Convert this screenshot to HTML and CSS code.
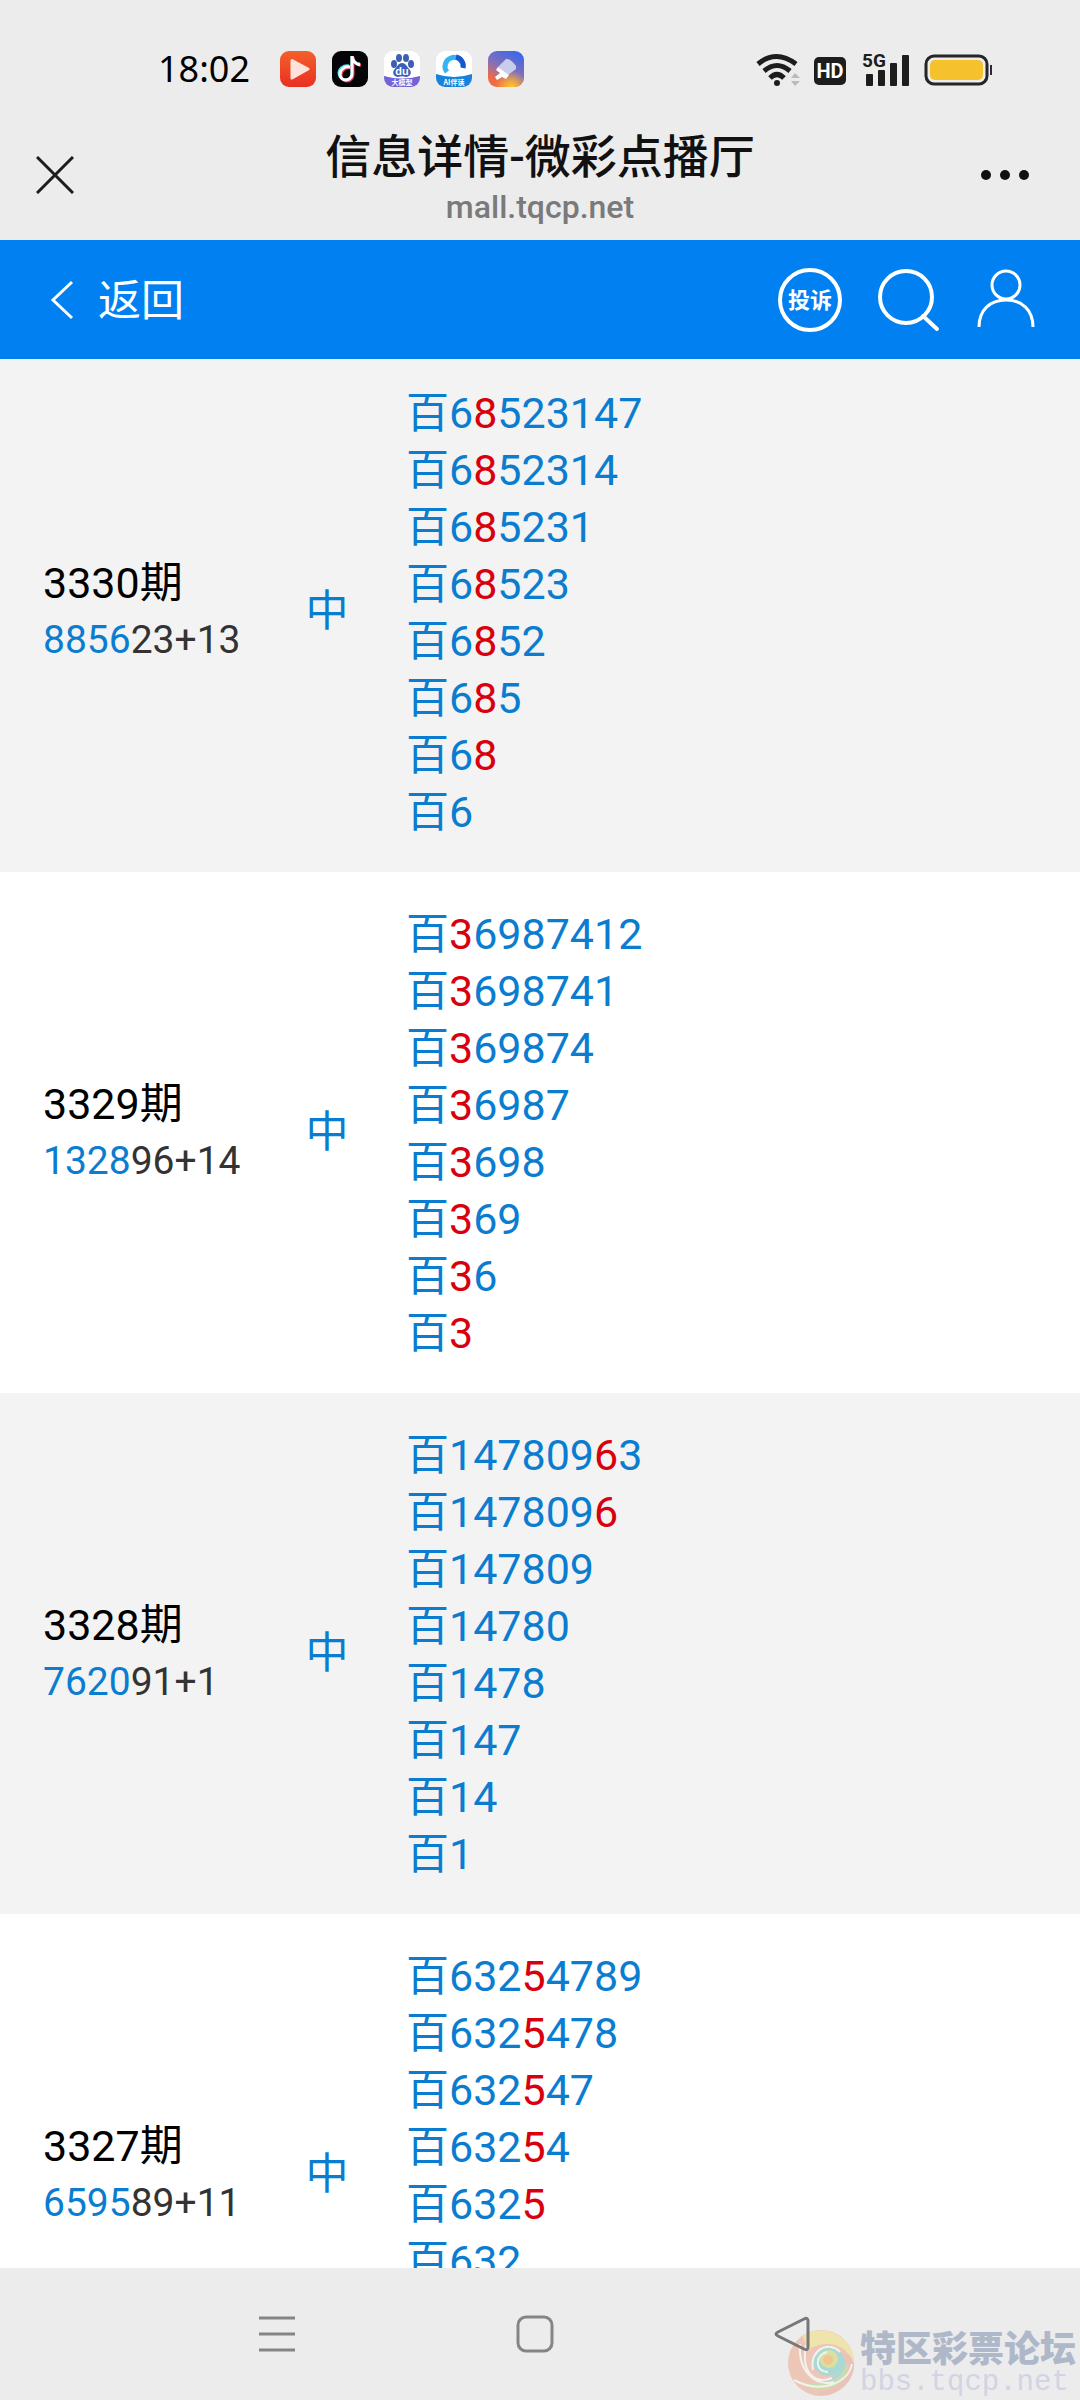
FILE: index.html
```html
<!DOCTYPE html>
<html lang="zh-CN">
<head>
<meta charset="utf-8">
<meta name="viewport" content="width=device-width, initial-scale=1">
<title>信息详情-微彩点播厅</title>
<link rel="stylesheet" href="styles.css">
</head>
<body>
<div class="screen">
  <div class="status">
    <div class="status-left">
      <time class="clock">18:02</time>
      <div class="apps">
        <svg width="36" height="36" viewBox="0 0 36 36"><defs><linearGradient id="play" x2="0" y2="1"><stop stop-color="#f4602a"/><stop offset="1" stop-color="#ea2f22"/></linearGradient></defs><rect width="36" height="36" rx="9" fill="url(#play)"/><path d="M12 9.500 L28 18 L12 27z" fill="#fde3da" stroke="#fde3da" stroke-width="3" stroke-linejoin="round"/></svg>
        <svg width="36" height="36" viewBox="0 0 36 36"><rect width="36" height="36" rx="9" fill="#050507"/><g fill="none" stroke-width="3"><path d="M17 15c-6-1-10 3-10 7s3 7 7 7 6-3 6-6V5c0 4 3 8 8 8" stroke="#3fe3e3"/><path d="M19 17c-6-1-10 3-10 7s3 6 6 6 6-3 6-6V6c0 4 3 8 8 8" stroke="#f04060"/><path d="M18 16c-6-1-10 3-10 7s3 6 6 6 6-3 6-6V5c0 4 3 8 8 9" stroke="#fff"/></g></svg>
        <svg width="36" height="36" viewBox="0 0 36 36"><clipPath id="tile"><rect width="36" height="36" rx="9"/></clipPath><g clip-path="url(#tile)"><rect width="36" height="36" fill="#fff"/><g fill="#3c5fb5"><ellipse cx="10" cy="13" rx="3" ry="4"/><ellipse cx="15" cy="7" rx="3" ry="4"/><ellipse cx="22" cy="7" rx="3" ry="4"/><ellipse cx="27" cy="13" rx="3" ry="4"/><path d="M18 12c4 0 5 4 8 7 2 3 0 7-4 7-3-1-5-1-8 0-4 0-6-4-4-7 3-3 4-7 8-7z"/></g><path d="M0 25q18 5 36 0v11H0z" fill="#7563d6"/></g><text x="18" y="24" class="logo-du">du</text><text x="18" y="34" class="logo-tag">大模型</text></svg>
        <svg width="36" height="36" viewBox="0 0 36 36"><g clip-path="url(#tile)"><rect width="36" height="36" fill="#fff"/><path d="M11 21a9 9 0 1 1 16-5" fill="none" stroke="#35b5ed" stroke-width="5"/><path d="M20 6a9 9 0 0 1 7 11" fill="none" stroke="#1757ce" stroke-width="5"/><path d="M0 23q18 6 36 0v13H0z" fill="#1682dc"/></g><text x="18" y="34" class="logo-tag">AI伴读</text></svg>
        <svg width="36" height="36" viewBox="0 0 36 36"><defs><linearGradient id="brush" x1=".7" x2=".2" y2="1"><stop stop-color="#3d68e8"/><stop offset=".5" stop-color="#8870b5"/><stop offset=".85" stop-color="#f06b45"/></linearGradient><radialGradient id="glow" cx=".65" cy="1" r=".45"><stop stop-color="#ffc928"/><stop offset="1" stop-color="#ffc928" stop-opacity="0"/></radialGradient></defs><rect width="36" height="36" rx="9" fill="url(#brush)"/><rect width="36" height="36" rx="9" fill="url(#glow)"/><path d="M10 16L18 8q4-1 10 7v3L20 24z" fill="#c9cdea"/><path d="M10 16l11 8-3 4-4-2-5 3-2-3 5-4-4-3z" fill="#fff"/></svg>
      </div>
    </div>
    <svg class="signals" width="238" height="40" viewBox="0 0 238 40">
      <g fill="none" stroke="#1d1d1d" stroke-width="5"><path d="M2 15q18-15 38 0"/><path d="M8 22q13-11 26 0"/><path d="M14 29q7-7 14 0"/></g>
      <circle cx="21" cy="34" r="3" fill="#1d1d1d"/>
      <path d="M35 29l4-5 5 5zM35 32h9l-5 5z" fill="#bbb"/>
      <rect x="58" y="8" width="32" height="28" rx="5" fill="#1d1d1d"/>
      <text x="74" y="29" class="sig-hd">HD</text>
      <text x="106" y="18" class="sig-5g">5G</text>
      <g fill="#1d1d1d"><rect x="110" y="25" width="7" height="12" rx="1"/><rect x="122" y="21" width="7" height="16" rx="1"/><rect x="134" y="14" width="7" height="23" rx="1"/><rect x="146" y="6" width="7" height="31" rx="1"/></g>
      <rect x="170" y="7" width="61" height="28" rx="8" fill="none" stroke="#252525" stroke-width="3"/>
      <rect x="174" y="11" width="53" height="20" rx="5" fill="#f5c22e"/>
      <rect x="234" y="16" width="2" height="10" fill="#302838"/>
    </svg>
  </div>

  <header class="browser-bar">
    <button class="icon-btn" aria-label="关闭"><svg width="38" height="38" viewBox="0 0 38 38"><path d="M1 1L37 37M37 1L1 37" stroke="#1c1c1c" stroke-width="3"/></svg></button>
    <div class="titles"><h1>信息详情-微彩点播厅</h1><p>mall.tqcp.net</p></div>
    <button class="icon-btn" aria-label="更多"><svg width="50" height="38" viewBox="0 0 50 38" fill="#111"><circle cx="6" cy="19" r="5"/><circle cx="25" cy="19" r="5"/><circle cx="44" cy="19" r="5"/></svg></button>
  </header>

  <nav class="site-bar">
    <a class="back" href="#"><svg width="24" height="40" viewBox="0 0 24 40"><path d="M22 2L3 20L22 38" fill="none" stroke="#fff" stroke-width="3"/></svg><span>返回</span></a>
    <div class="tools">
      <a class="complain" href="#">投诉</a>
      <a class="icon-link" href="#" aria-label="搜索"><svg width="62" height="64" viewBox="0 0 62 64" fill="none" stroke="#fff" stroke-width="4" stroke-linecap="round"><circle cx="28" cy="29" r="26"/><path d="M45 48L59 61"/></svg></a>
      <a class="icon-link" href="#" aria-label="我的"><svg width="60" height="64" viewBox="0 0 60 64" fill="none" stroke="#fff" stroke-width="3"><circle cx="30" cy="17" r="14"/><path d="M3 59C3 42 14 32 30 32S57 42 57 59"/></svg></a>
    </div>
  </nav>

  <main class="content">
    <table class="plans">
      <colgroup><col class="c-issue"><col class="c-hit"><col></colgroup>
      <tbody>
        <tr>
          <td class="issue"><p class="no">3330期</p><p class="draw"><b>8856</b>23+13</p></td>
          <td class="hit">中</td>
          <td class="picks"><p>百6<em>8</em>523147</p><p>百6<em>8</em>52314</p><p>百6<em>8</em>5231</p><p>百6<em>8</em>523</p><p>百6<em>8</em>52</p><p>百6<em>8</em>5</p><p>百6<em>8</em></p><p>百6</p></td>
        </tr>
        <tr>
          <td class="issue"><p class="no">3329期</p><p class="draw"><b>1328</b>96+14</p></td>
          <td class="hit">中</td>
          <td class="picks"><p>百<em>3</em>6987412</p><p>百<em>3</em>698741</p><p>百<em>3</em>69874</p><p>百<em>3</em>6987</p><p>百<em>3</em>698</p><p>百<em>3</em>69</p><p>百<em>3</em>6</p><p>百<em>3</em></p></td>
        </tr>
        <tr>
          <td class="issue"><p class="no">3328期</p><p class="draw"><b>7620</b>91+1</p></td>
          <td class="hit">中</td>
          <td class="picks"><p>百147809<em>6</em>3</p><p>百147809<em>6</em></p><p>百147809</p><p>百14780</p><p>百1478</p><p>百147</p><p>百14</p><p>百1</p></td>
        </tr>
        <tr>
          <td class="issue"><p class="no">3327期</p><p class="draw"><b>6595</b>89+11</p></td>
          <td class="hit">中</td>
          <td class="picks"><p>百632<em>5</em>4789</p><p>百632<em>5</em>478</p><p>百632<em>5</em>47</p><p>百632<em>5</em>4</p><p>百632<em>5</em></p><p>百632</p><p>百63</p><p>百6</p></td>
        </tr>
      </tbody>
    </table>
  </main>

  <footer class="system-nav">
    <button class="icon-btn" aria-label="最近任务"><svg width="40" height="40" viewBox="0 0 40 40"><path d="M2 4H38M2 20H38M2 36H38" stroke="#858585" stroke-width="3"/></svg></button>
    <button class="icon-btn" aria-label="主页"><svg width="40" height="40" viewBox="0 0 40 40"><rect x="3" y="3" width="34" height="34" rx="8" fill="none" stroke="#858585" stroke-width="3"/></svg></button>
    <button class="icon-btn" aria-label="返回"><svg width="40" height="40" viewBox="0 0 40 40"><path d="M5 18L31 5Q35 3 35 7V33Q35 37 31 35L5 22Q1 20 5 18z" fill="none" stroke="#777" stroke-width="3"/></svg></button>
    <div class="watermark">
      <svg width="70" height="70" viewBox="0 0 70 70">
        <circle cx="35" cy="35" r="33" fill="#ecc0ae"/>
        <path d="M17 8A33 33 0 0 1 68 38C64 18 42 9 22 22z" fill="#f0e3a0"/>
        <path d="M68 36C68 56 50 69 30 67C48 60 58 48 52 24C62 24 67 30 68 36z" fill="#e9bcae"/>
        <path d="M62 34C64 52 46 66 24 60L8 52C36 62 56 52 62 34z" fill="#c2dca5"/>
        <path d="M27 42C22 24 38 14 50 21C66 30 60 52 38 55C58 47 54 29 42 28C34 27 30 36 27 42z" fill="#9ed8d8"/>
        <circle cx="42" cy="33" r="15" fill="#9fd6cf"/>
        <circle cx="43" cy="31" r="9" fill="#d8df94"/><circle cx="42" cy="32" r="5" fill="#f0bf80"/>
        <path d="M14 16C12 42 28 59 48 54M20 17C15 44 28 57 46 50M66 36C62 56 34 66 8 52M27 42C23 20 44 13 54 24M42 44C28 44 29 26 41 24" fill="none" stroke="#f6f2ee" stroke-width="2"/>
      </svg>
      <div class="wm-text"><strong>特区彩票论坛</strong><span>bbs.tqcp.net</span></div>
    </div>
  </footer>
</div>
</body>
</html>
```
FILE: styles.css
```css
* {
  box-sizing: border-box;
  margin: 0;
  padding: 0;
}

body {
  font-family: Roboto, "Noto Sans CJK SC", sans-serif;
  background: #ececec;
  color: #000;
}

a {
  color: inherit;
  text-decoration: none;
}

button {
  border: 0;
  background: none;
}

svg {
  display: block;
}

.screen {
  display: flex;
  flex-direction: column;
  height: 100vh;
  overflow: hidden;
}

/* phone status bar */
.status {
  display: flex;
  align-items: center;
  justify-content: space-between;
  height: 120px;
  padding: 18px 86px 0 158px;
}

.status-left {
  display: flex;
  align-items: center;
  gap: 30px;
}

.clock {
  font: 36px/40px "Noto Sans", sans-serif;
}

.apps {
  display: flex;
  gap: 16px;
}

.logo-du {
  font: bold 11px "Liberation Sans", sans-serif;
  fill: #fff;
  text-anchor: middle;
}

.logo-tag {
  font: bold 7px "Noto Sans CJK SC", sans-serif;
  fill: #fff;
  text-anchor: middle;
}

.sig-hd {
  font: bold 20px Roboto, sans-serif;
  fill: #fff;
  text-anchor: middle;
}

.sig-5g {
  font: bold 19px Roboto, sans-serif;
  fill: #1d1d1d;
}

/* in-app browser title bar */
.browser-bar {
  display: flex;
  align-items: center;
  justify-content: space-between;
  height: 120px;
  padding: 0 50px 10px 36px;
}

.titles {
  flex: 1;
  padding: 7px 0 0 26px;
  text-align: center;
}

.titles h1 {
  font-size: 46px;
  line-height: 56px;
  font-weight: 500;
  color: #111;
}

.titles p {
  font-size: 32px;
  line-height: 44px;
  font-weight: 500;
  color: #7a7a7a;
}

/* site header */
.site-bar {
  position: relative;
  z-index: 1;
  display: flex;
  align-items: center;
  justify-content: space-between;
  height: 119px;
  padding: 0 44px 0 50px;
  background: #0080f1;
  color: #fff;
}

.back {
  display: flex;
  align-items: center;
  gap: 24px;
  font-size: 43px;
  line-height: 57px;
}

.back span {
  padding-top: 4px;
}

.tools {
  display: flex;
  align-items: center;
  gap: 36px;
}

.complain {
  width: 64px;
  height: 64px;
  border: 4px solid #fff;
  border-radius: 50%;
  font-size: 22px;
  line-height: 58px;
  font-weight: 700;
  text-align: center;
}

/* plan list, scrolled slightly under the header */
.content {
  flex: 1;
  min-height: 0;
  margin-top: -8px;
  overflow: hidden;
  background: #fff;
}

.plans {
  width: 100%;
  table-layout: fixed;
  border-collapse: collapse;
  font-size: 43px;
  line-height: 57px;
}

.plans tr:nth-child(odd) {
  background: #f3f3f3;
}

.c-issue {
  width: 280px;
}

.c-hit {
  width: 94px;
}

.issue {
  padding-left: 43px;
}

.draw {
  font-size: 39px;
  color: #333;
}

.draw b {
  font-weight: 400;
  color: #0a7dd0;
}

.hit {
  text-align: center;
  color: #0a7dd0;
}

.picks {
  padding: 34px 0 31px 32px;
  color: #0a7dd0;
}

.picks em {
  font-style: normal;
  color: #d9000d;
}

/* system navigation */
.system-nav {
  position: relative;
  display: flex;
  align-items: flex-start;
  justify-content: center;
  gap: 218px;
  height: 132px;
  padding: 46px 10px 0 0;
}

.icon-btn {
  position: relative;
  z-index: 1;
}

.watermark {
  position: absolute;
  right: 4px;
  bottom: 2px;
  display: flex;
  align-items: center;
  gap: 4px;
  opacity: 0.85;
}

.wm-text {
  display: flex;
  flex-direction: column;
}

.wm-text strong {
  font-size: 36px;
  line-height: 40px;
  font-weight: 900;
  color: #a4afc4;
}

.wm-text span {
  font: 29px/26px "Liberation Mono", monospace;
  color: #cdd0e2;
}
```
